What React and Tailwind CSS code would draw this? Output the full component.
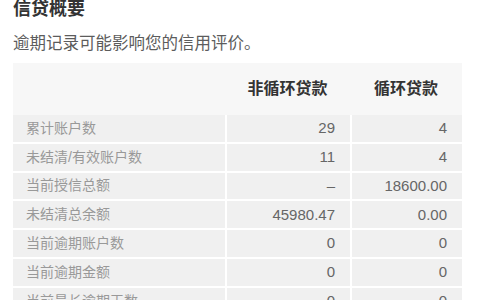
import React from "react";

const rows = [
  { label: "累计账户数", a: "29", b: "4" },
  { label: "未结清/有效账户数", a: "11", b: "4" },
  { label: "当前授信总额", a: "–", b: "18600.00" },
  { label: "未结清总余额", a: "45980.47", b: "0.00" },
  { label: "当前逾期账户数", a: "0", b: "0" },
  { label: "当前逾期金额", a: "0", b: "0" },
  { label: "当前最长逾期天数", a: "0", b: "0" },
];

const App = () => {
  return (
    <div
      className="w-[480px] h-[300px] overflow-hidden bg-white pl-[13px]"
      style={{ fontFamily: '"Liberation Sans", "Noto Sans CJK SC", sans-serif' }}
    >
      <div className="text-[18px] leading-[18px] font-bold text-[#333]">信贷概要</div>
      <div className="mt-[17px] text-[16.5px] leading-[16px] text-[#5c5c5c]">
        逾期记录可能影响您的信用评价。
      </div>

      <div className="mt-[12px] w-[449px] bg-[#f7f7f7]">
        <div className="grid grid-cols-[212px_125px_112px] h-[52px] items-center text-[16px] font-bold text-[#333]">
          <div></div>
          <div className="text-center">非循环贷款</div>
          <div className="text-center">循环贷款</div>
        </div>
        <div className="flex flex-col gap-[2px] bg-white">
          {rows.map((r) => (
            <div
              key={r.label}
              className="grid grid-cols-[212px_123px_110px] gap-x-[2px] h-[26.8px]"
            >
              <div className="bg-[#f0f0f0] flex items-center pl-[13px] text-[14px] text-[#999]">
                {r.label}
              </div>
              <div className="bg-[#f0f0f0] flex items-center justify-end pr-[15px] text-[15px] text-[#666]">
                {r.a}
              </div>
              <div className="bg-[#f0f0f0] flex items-center justify-end pr-[15px] text-[15px] text-[#666]">
                {r.b}
              </div>
            </div>
          ))}
        </div>
      </div>
    </div>
  );
};

export default App;
